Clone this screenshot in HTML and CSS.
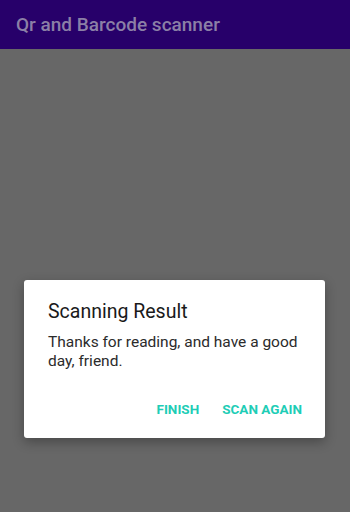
FILE: index.html
```html
<!DOCTYPE html>
<html>
<head>
<meta charset="utf-8">
<link rel="stylesheet" href="styles.css">
</head>
<body>
<div class="screen">
  <header class="appbar"><span class="appbar-title">Qr and Barcode scanner</span></header>
  <main class="content">
    <div class="dialog">
      <div class="dialog-title">Scanning Result</div>
      <div class="dialog-message">Thanks for reading, and have a good day, friend.</div>
      <div class="dialog-actions">
        <span class="btn">FINISH</span>
        <span class="btn">SCAN AGAIN</span>
      </div>
    </div>
  </main>
</div>
</body>
</html>
```
FILE: styles.css
```css
html, body {
  margin: 0;
  padding: 0;
}
body {
  width: 350px;
  height: 512px;
  overflow: hidden;
  font-family: Roboto, "Noto Sans", sans-serif;
  background: #676767;
}
.screen {
  display: flex;
  flex-direction: column;
  height: 512px;
}
.appbar {
  height: 49px;
  background: #27006a;
  display: flex;
  align-items: center;
  padding-left: 16px;
  flex-shrink: 0;
}
.appbar-title {
  color: #8b7fa6;
  font-size: 19px;
  font-weight: 500;
}
.content {
  flex: 1;
  padding: 231px 0 0 24px;
  display: flex;
  justify-content: flex-start;
  align-items: flex-start;
}
.dialog {
  width: 301px;
  background: #ffffff;
  border-radius: 3px;
  box-shadow: 0 4px 12px rgba(0,0,0,0.3);
  padding: 20px 0 11px;
  box-sizing: border-box;
}
.dialog-title {
  padding: 0 24px;
  font-size: 19.5px;
  line-height: 24px;
  color: #1a1a1a;
  font-weight: 400;
}
.dialog-message {
  padding: 9px 20px 0 24px;
  font-size: 15.5px;
  line-height: 19px;
  color: #2b2b2b;
}
.dialog-actions {
  display: flex;
  justify-content: flex-end;
  gap: 7px;
  padding: 20px 15px 0;
}
.btn {
  height: 36px;
  line-height: 36px;
  padding: 0 8px;
  color: #1ecdb6;
  font-size: 13.5px;
  font-weight: 700;
  letter-spacing: 0;
}
```
